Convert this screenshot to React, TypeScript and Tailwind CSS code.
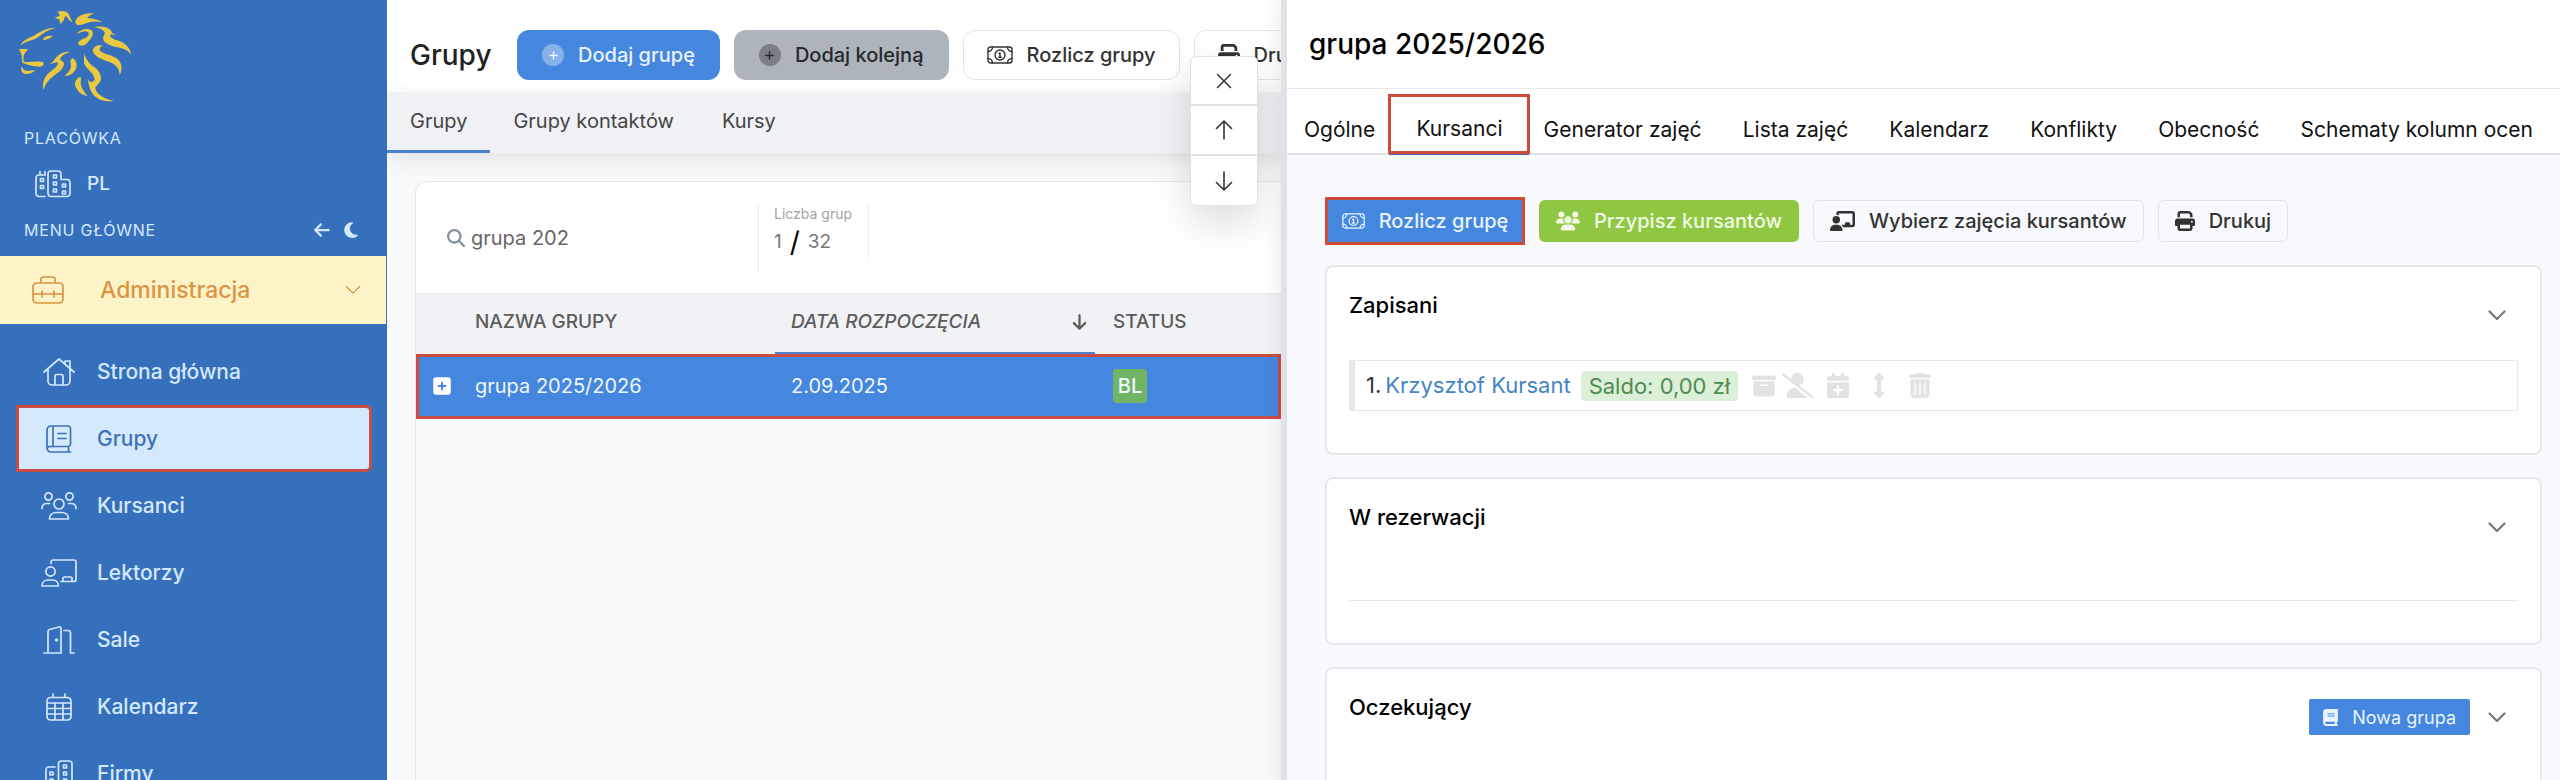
import type { ReactNode } from "react";
import {
  FaArrowDown,
  FaArrowLeft,
  FaBook,
  FaBoxArchive,
  FaCalendarPlus,
  FaChalkboardUser,
  FaMagnifyingGlass,
  FaMoon,
  FaPlus,
  FaPrint,
  FaSquarePlus,
  FaTrashCan,
  FaUserSlash,
  FaUsers,
} from "react-icons/fa6";
import { FaArrowsAltV } from "react-icons/fa";

type LineIconProps = { viewBox: string; className: string; children: ReactNode; strokeWidth?: number };

function LineIcon({ viewBox, className, children, strokeWidth = 1.7 }: LineIconProps) {
  return (
    <svg
      viewBox={viewBox}
      className={className}
      fill="none"
      stroke="currentColor"
      strokeWidth={strokeWidth}
      strokeLinecap="round"
      strokeLinejoin="round"
      aria-hidden="true"
    >
      {children}
    </svg>
  );
}

function LionLogo() {
  return (
    <svg viewBox="54 28 342 280" className="h-[94px] w-[114px]" fill="#eac83f" role="img" aria-label="Logo">
      <path d="M62 136C68 120 84 116 98 109C118 98 138 82 168 83C148 88 134 96 122 106C112 114 104 118 94 121C82 125 72 128 62 136Z" />
      <path d="M128 120C132 108 144 106 158 108C150 116 140 120 128 120Z" />
      <path d="M58 147L84 147C80 154 76 158 72 164C70 172 70 178 71 185C90 188 106 182 128 186C134 192 130 198 122 200C104 200 86 196 68 189C64 180 68 168 62 158Z" />
      <path d="M64 198C68 208 74 212 82 213C90 213 98 211 106 211C98 219 88 223 76 222C66 220 62 212 64 198Z" />
      <path d="M172 36C186 30 204 34 208 46C210 54 214 58 217 66C206 62 204 52 196 48C192 52 196 60 180 73C180 62 182 58 164 54C172 50 178 48 180 44Z" />
      <path d="M226 68C226 50 250 38 282 39C274 44 266 48 262 54C276 56 294 58 306 67C284 62 268 66 252 72C240 77 228 76 226 68Z" />
      <path d="M229 102C238 90 260 82 274 90C284 100 276 114 262 128C254 138 240 140 235 132C234 122 246 118 256 114C264 110 270 102 264 96C256 90 242 96 229 102Z" />
      <path d="M281 82C300 76 330 82 334 94C336 100 342 104 350 106C340 106 330 100 330 108C336 120 358 120 372 130C384 140 392 150 393 164C384 150 372 146 352 142C334 138 312 130 309 116C310 104 318 102 312 94C304 86 294 84 281 82Z" />
      <path d="M278 152C280 138 296 132 310 138C298 140 296 148 304 155C318 164 344 166 356 180C368 196 366 214 359 225C358 206 350 196 334 188C314 180 282 172 278 152Z" />
      <path d="M252 160C258 178 266 188 278 198C292 206 302 218 303 236C301 250 288 256 286 264C288 282 314 298 342 302C318 308 292 300 278 282C268 268 266 250 263 238C270 248 278 248 284 240C286 222 258 208 252 190Z" />
      <path d="M209 156C190 152 172 166 164 178C160 186 154 190 150 192C160 192 168 184 174 188C174 204 148 212 138 228C128 244 128 258 130 270C136 252 144 240 158 230C174 218 192 208 192 190C190 182 180 182 180 176C186 166 196 160 209 156Z" />
      <path d="M217 174C230 182 234 196 226 210C218 222 208 228 194 228C206 216 216 206 212 192C210 184 212 178 217 174Z" />
      <path d="M240 230C226 236 220 252 230 266C238 280 248 284 263 288C252 274 242 262 242 246C242 240 246 234 240 230Z" />
    </svg>
  );
}

function BuildingsIcon({ className }: { className: string }) {
  return (
    <LineIcon viewBox="0 0 36 28" className={className}>
      <path d="M10 26.500H4a3 3 0 0 1-3-3V8a3 3 0 0 1 3-3h6M5 5V1.500M10 5V1.500" />
      <path d="M13 23.500V4a3 3 0 0 1 3-3h7a3 3 0 0 1 3 3v5.500h6a3 3 0 0 1 3 3v11a3 3 0 0 1-3 3H16a3 3 0 0 1-3-3Z" />
      <path d="M5.500 8.500h3v3h-3zM5.500 15.500h3v3h-3zM18.500 5h3v3h-3zM18.500 12h3v3h-3zM18.500 19h3v3h-3zM27.500 14h3v3h-3zM27.500 21h3v3h-3z" />
    </LineIcon>
  );
}

function BriefcaseIcon() {
  return (
    <LineIcon viewBox="0 0 32 28" className="h-7 w-8">
      <path d="M9 7V3a2 2 0 0 1 2-2h10a2 2 0 0 1 2 2v4M5 7h22a4 4 0 0 1 4 4v12a4 4 0 0 1-4 4H5a4 4 0 0 1-4-4V11a4 4 0 0 1 4-4ZM1 18h30M10 15v6M22 15v6" />
    </LineIcon>
  );
}

function HomeIcon() {
  return (
    <LineIcon viewBox="0 0 32 28" className="h-7 w-8">
      <path d="M1 14 16 1l15 13M5 11v12a4 4 0 0 0 4 4h14a4 4 0 0 0 4-4V11M22 5.500V3h5v7M12 27v-9a1.500 1.500 0 0 1 1.500-1.500h5A1.500 1.500 0 0 1 20 18v9" />
    </LineIcon>
  );
}

function BookIcon() {
  return (
    <LineIcon viewBox="0 0 26 28" className="h-7 w-[26px]">
      <path d="M24.500 27H5a4 4 0 0 1-4-4V5a4 4 0 0 1 4-4h17a2.500 2.500 0 0 1 2.500 2.500V19a2.500 2.500 0 0 1-2.500 2.500H4.500A3 3 0 0 0 1 24M7 1v20.500M22.500 21.500V27M12 8.500h8M12 13.500h8" />
    </LineIcon>
  );
}

function UsersIcon() {
  return (
    <LineIcon viewBox="0 0 36 28" className="h-7 w-9">
      <circle cx="7.500" cy="4.500" r="3.600" />
      <circle cx="28.500" cy="4.500" r="3.600" />
      <circle cx="18" cy="12" r="5" />
      <path d="M1 16.500c0-3 2-5 5-5h2.500M35 16.500c0-3-2-5-5-5h-2.500M8.500 27c0-4 3-6.500 7-6.500h5c4 0 7 2.500 7 6.500Z" />
    </LineIcon>
  );
}

function TeacherIcon() {
  return (
    <LineIcon viewBox="0 0 36 28" className="h-7 w-9">
      <circle cx="9.500" cy="12.500" r="4.600" />
      <path d="M1 27c0-3.500 2.500-6 6-6h4.500c3.500 0 6 2.500 6 6ZM10 4.500V3a2 2 0 0 1 2-2h21a2 2 0 0 1 2 2v17.500a2 2 0 0 1-2 2H20M22 22.500v-3a1.500 1.500 0 0 1 1.500-1.500h6a1.500 1.500 0 0 1 1.500 1.500v3" />
    </LineIcon>
  );
}

function DoorIcon() {
  return (
    <LineIcon viewBox="0 0 32 28" className="h-7 w-8">
      <path d="M1 27h17V2.500A1.500 1.500 0 0 0 16 1L6.500 3.500A2 2 0 0 0 5 5.500V27M21 4.500h4a2.500 2.500 0 0 1 2.500 2.500v20H31" />
      <circle cx="13.500" cy="14" r="0.800" fill="currentColor" />
    </LineIcon>
  );
}

function CalendarIcon() {
  return (
    <LineIcon viewBox="0 0 26 28" className="h-7 w-[26px]">
      <path d="M4.500 4.500h17A3.500 3.500 0 0 1 25 8v15.500a3.500 3.500 0 0 1-3.500 3.500h-17A3.500 3.500 0 0 1 1 23.500V8a3.500 3.500 0 0 1 3.500-3.500ZM7 1v3.500M19 1v3.500M1 10h24M1 15.500h24M1 21h24M9 10v17M17 10v17" />
    </LineIcon>
  );
}

function OfficeIcon() {
  return (
    <LineIcon viewBox="0 0 28 28" className="h-7 w-7">
      <path d="M9 27H3.500A2.500 2.500 0 0 1 1 24.500V9.500A2.500 2.500 0 0 1 3.500 7H10M13.500 27V3.500A2.500 2.500 0 0 1 16 1h8.500A2.500 2.500 0 0 1 27 3.500v21a2.500 2.500 0 0 1-2.500 2.500Z" />
      <path d="M5 12h3v3H5zM5 19h3v3H5zM18.500 5h3v3h-3zM18.500 12h3v3h-3zM18.500 19h3v3h-3z" />
    </LineIcon>
  );
}

function BanknoteIcon({ className }: { className: string }) {
  return (
    <LineIcon viewBox="0 0 26 18" className={className} strokeWidth={1.400}>
      <rect x="1" y="1" width="24" height="16" rx="2.500" />
      <circle cx="13" cy="9" r="5" />
      <path d="M12 7.500l1-.5v4M11.800 11.300h2.400M1 5.500c2.500 0 4.500-2 4.500-4.500M25 5.500c-2.500 0-4.500-2-4.500-4.500M1 12.500c2.500 0 4.500 2 4.500 4.500M25 12.500c-2.500 0-4.500 2-4.500 4.500" />
    </LineIcon>
  );
}

function ChevronIcon({ className, strokeWidth }: { className: string; strokeWidth: number }) {
  return (
    <LineIcon viewBox="0 0 18 11" className={className} strokeWidth={strokeWidth}>
      <path d="M1.500 1.500 9 9l7.500-7.500" />
    </LineIcon>
  );
}

const menuItems = [
  { label: "Strona główna", icon: <HomeIcon /> },
  { label: "Grupy", icon: <BookIcon />, active: true },
  { label: "Kursanci", icon: <UsersIcon /> },
  { label: "Lektorzy", icon: <TeacherIcon /> },
  { label: "Sale", icon: <DoorIcon /> },
  { label: "Kalendarz", icon: <CalendarIcon /> },
  { label: "Firmy", icon: <OfficeIcon /> },
];

function Sidebar() {
  return (
    <aside className="flex h-full flex-col overflow-hidden bg-[#3670bd] text-[#d4e8fc]">
      <div className="px-[18px] pt-[9px]">
        <LionLogo />
      </div>
      <div className="mt-[21px] px-6 text-[16px] leading-7 tracking-wider">PLACÓWKA</div>
      <a href="#pl" className="mt-3 flex h-10 shrink-0 items-center gap-4 pl-[35px] text-[19px] font-medium">
        <BuildingsIcon className="h-7 w-9" />
        PL
      </a>
      <div className="mt-2 flex h-9 shrink-0 items-center justify-between pr-7 pl-6">
        <span className="text-[16px] tracking-wider">MENU GŁÓWNE</span>
        <span className="flex items-center gap-3">
          <button type="button" aria-label="Zwiń menu">
            <FaArrowLeft className="h-[18px] w-[18px]" />
          </button>
          <button type="button" aria-label="Tryb ciemny">
            <FaMoon className="h-[18px] w-4" />
          </button>
        </span>
      </div>
      <button
        type="button"
        className="mt-2 mr-px flex h-[68px] shrink-0 items-center bg-[#fcf3c7] pr-[25px] pl-8 text-[23px] font-medium text-[#dc9344]"
      >
        <BriefcaseIcon />
        <span className="ml-9 flex-1 text-left">Administracja</span>
        <ChevronIcon className="h-[10px] w-4" strokeWidth={1.400} />
      </button>
      <nav className="mt-[14px] flex flex-col pr-[15px] pl-4">
        {menuItems.map((item) => (
          <a
            key={item.label}
            href="#menu"
            className={
              item.active
                ? "flex h-[67px] shrink-0 items-center rounded-r-md border-3 border-[#c94c45] bg-[#d5e9fd] text-[21px] font-medium text-[#3f72b8]"
                : "flex h-[67px] shrink-0 items-center border-3 border-transparent text-[21px] font-medium"
            }
          >
            <span className="ml-[18px] flex w-11 justify-center">{item.icon}</span>
            <span className="ml-4">{item.label}</span>
          </a>
        ))}
      </nav>
    </aside>
  );
}

function GroupsPanel() {
  return (
    <main className="relative h-full overflow-hidden bg-[#f8f9fb]">
      <div className="flex h-full flex-col">
        <header className="flex h-[92px] shrink-0 items-center bg-white pt-[30px] pb-3 pl-[23px] whitespace-nowrap">
          <h1 className="w-[107px] shrink-0 text-[28px] font-medium text-[#222]">Grupy</h1>
          <div className="flex gap-[14px] text-[20px] font-medium">
            <button
              type="button"
              className="flex h-[50px] items-center gap-[14px] rounded-xl bg-[#4587de] px-[25px] text-[#e8f3ff]"
            >
              <span className="flex h-[22px] w-[22px] items-center justify-center rounded-full bg-white/35">
                <FaPlus className="h-[11px] w-[11px]" />
              </span>
              Dodaj grupę
            </button>
            <button
              type="button"
              className="flex h-[50px] items-center gap-[14px] rounded-xl bg-[#aeb4bc] px-[25px] text-[#26282c]"
            >
              <span className="flex h-[22px] w-[22px] items-center justify-center rounded-full bg-[#7b7e85]">
                <FaPlus className="h-[11px] w-[11px]" />
              </span>
              Dodaj kolejną
            </button>
            <button
              type="button"
              className="flex h-[50px] items-center gap-[14px] rounded-xl border border-[#e2e4e8] bg-white px-[23px] text-[#333]"
            >
              <BanknoteIcon className="h-[18px] w-[26px]" />
              Rozlicz grupy
            </button>
            <button
              type="button"
              className="flex h-[50px] items-center gap-[14px] rounded-xl border border-[#e2e4e8] bg-white px-[23px] text-[#333]"
            >
              <FaPrint className="h-[22px] w-[22px]" />
              Drukuj
            </button>
          </div>
        </header>
        <nav className="z-10 flex h-[61px] shrink-0 bg-[#f1f2f5] text-[20px] text-[#444] shadow-[0_6px_20px_rgba(0,0,0,0.09)]">
          <a href="#grupy" className="flex items-center border-b-3 border-[#4a82cc] px-[23px]">
            Grupy
          </a>
          <a href="#kontakty" className="flex items-center border-b-3 border-transparent px-[23px]">
            Grupy kontaktów
          </a>
          <a href="#kursy" className="flex items-center border-b-3 border-transparent px-[25px]">
            Kursy
          </a>
        </nav>
        <section className="mt-7 ml-7 flex-1 rounded-tl-xl border-t border-l border-[#e4e6ea]">
          <div className="flex h-[111px] rounded-tl-xl bg-white pt-[22px] pl-[31px]">
            <label className="flex h-[67px] w-[312px] items-center gap-[6px] border-r border-[#ebebeb]">
              <FaMagnifyingGlass className="h-[18px] w-[18px] text-[#8590a3]" />
              <input
                type="text"
                aria-label="Szukaj"
                defaultValue="grupa 202"
                className="w-64 bg-transparent text-[20px] text-[#666] outline-none"
              />
            </label>
            <div className="flex h-[54px] w-[110px] flex-col border-r border-[#ebebeb] pl-[15px]">
              <span className="text-[14px] leading-5 text-[#a3a3a3]">Liczba grup</span>
              <span className="flex items-center gap-2 text-[19px] leading-9 text-[#777]">
                1 <span className="text-[28px] text-black">/</span> 32
              </span>
            </div>
          </div>
          <table className="w-full table-fixed border-collapse text-left text-[20px]">
            <colgroup>
              <col className="w-[359px]" />
              <col className="w-[320px]" />
              <col />
            </colgroup>
            <thead className="text-[19px] text-[#5c5c5c]">
              <tr className="h-[60px] border-t border-[#e4e6ea] bg-[#f1f2f5]">
                <th className="pb-1 pl-[59px] font-medium">NAZWA GRUPY</th>
                <th className="pr-2 pb-1 pl-4 font-medium italic shadow-[inset_0_-2px_0_#4a82cc]">
                  <span className="flex items-center justify-between">
                    DATA ROZPOCZĘCIA
                    <FaArrowDown className="h-[18px] w-[15px]" />
                  </span>
                </th>
                <th className="pb-1 pl-[18px] font-medium">STATUS</th>
              </tr>
            </thead>
            <tbody>
              <tr className="h-[65px] bg-[#4587de] text-[#eef6ff] outline-3 -outline-offset-3 outline-[#c94c45]">
                <td className="pl-[17px]">
                  <span className="flex items-center gap-[24px]">
                    <FaSquarePlus className="h-5 w-[18px] text-white" />
                    grupa 2025/2026
                  </span>
                </td>
                <td className="px-4">2.09.2025</td>
                <td className="pl-[18px]">
                  <span className="flex h-[34px] w-[34px] items-center justify-center rounded-sm bg-[#6fb565] font-medium">
                    BL
                  </span>
                </td>
              </tr>
            </tbody>
          </table>
        </section>
      </div>
      <div className="absolute top-14 right-[23px] z-20 flex w-[68px] flex-col divide-y-2 divide-[#e0e1e5] rounded-md border border-[#e0e1e5] bg-white text-[#333] shadow-[0_16px_40px_rgba(0,0,0,0.14)]">
        <button type="button" aria-label="Zamknij" className="flex h-[49px] items-center justify-center">
          <LineIcon viewBox="0 0 16 16" className="h-4 w-4" strokeWidth={1.500}>
            <path d="m1.500 1.500 13 13M14.500 1.500l-13 13" />
          </LineIcon>
        </button>
        <button type="button" aria-label="W górę" className="flex h-[50px] items-center justify-center">
          <LineIcon viewBox="0 0 18 20" className="h-5 w-[18px]" strokeWidth={1.600}>
            <path d="M9 19V1M1.500 8.500 9 1l7.500 7.500" />
          </LineIcon>
        </button>
        <button type="button" aria-label="W dół" className="flex h-[49px] items-center justify-center">
          <LineIcon viewBox="0 0 18 20" className="h-5 w-[18px]" strokeWidth={1.600}>
            <path d="M9 1v18M1.500 11.500 9 19l7.500-7.500" />
          </LineIcon>
        </button>
      </div>
    </main>
  );
}

const detailTabs = [
  "Generator zajęć",
  "Lista zajęć",
  "Kalendarz",
  "Konflikty",
  "Obecność",
  "Schematy kolumn ocen",
];

function Card({ title, action, children }: { title: string; action?: ReactNode; children?: ReactNode }) {
  return (
    <section className="rounded-lg border-2 border-[#e6e8eb] bg-white px-[22px] pt-[22px] pb-[42px]">
      <div className="flex items-start justify-between">
        <h3 className="text-[22px] leading-8 font-medium text-black">{title}</h3>
        <div className="mt-2 mr-3 flex h-9 items-center gap-[18px]">
          {action}
          <button type="button" aria-label={`Rozwiń: ${title}`}>
            <ChevronIcon className="h-[11px] w-[18px] text-[#777]" strokeWidth={2.200} />
          </button>
        </div>
      </div>
      {children}
    </section>
  );
}

function DetailPanel() {
  return (
    <section className="z-30 flex h-full flex-col overflow-hidden border-l-6 border-[#e0e2e7] bg-[#f8f9fc] whitespace-nowrap shadow-[-4px_0_16px_rgba(0,0,0,0.07)]">
      <header className="flex h-[89px] shrink-0 items-center border-b border-[#e6e7ea] bg-white pl-[22px]">
        <h2 className="text-[28px] font-medium text-black">grupa 2025/2026</h2>
      </header>
      <nav className="flex h-[66px] shrink-0 justify-between border-b-2 border-[#dfe0e4] bg-white pt-[5px] pr-[27px] pl-[17px] text-[21px] text-[#111]">
        <a href="#ogolne" className="flex items-center pt-3">
          Ogólne
        </a>
        <a
          href="#kursanci"
          className="-mx-7 flex h-[60px] items-center border-3 border-[#d04a3c] px-[25px] pt-[9px] shadow-[0_2px_0_-1px_#4a5fae]"
        >
          Kursanci
        </a>
        {detailTabs.map((tab) => (
          <a key={tab} href="#tab" className="flex items-center pt-3">
            {tab}
          </a>
        ))}
      </nav>
      <div className="flex flex-col gap-[22px] pt-[42px] pr-[18px] pl-[38px]">
        <div className="-mb-0.5 flex items-center gap-[14px] text-[20px] font-medium text-[#333]">
          <button
            type="button"
            className="flex h-12 w-[200px] items-center justify-center gap-[14px] border-3 border-[#d04a3c] bg-[#4587de] text-[#e8f3ff]"
          >
            <BanknoteIcon className="h-4 w-[23px]" />
            Rozlicz grupę
          </button>
          <button
            type="button"
            className="flex h-[42px] items-center gap-[14px] rounded-md bg-[#8fc742] px-[17px] text-[#f2fbe4]"
          >
            <FaUsers className="h-5 w-6" />
            Przypisz kursantów
          </button>
          <button
            type="button"
            className="flex h-[42px] items-center gap-[14px] rounded-md border border-[#e0e2e6] px-4"
          >
            <FaChalkboardUser className="h-5 w-[25px]" />
            Wybierz zajęcia kursantów
          </button>
          <button
            type="button"
            className="flex h-[42px] items-center gap-[14px] rounded-md border border-[#e0e2e6] px-4"
          >
            <FaPrint className="h-5 w-5" />
            Drukuj
          </button>
        </div>
        <Card title="Zapisani">
          <div className="mt-[27px] flex h-[51px] items-center border border-l-6 border-[#e8e8e8] pl-[11px] text-[22px]">
            <span className="text-[#333]">1.</span>
            <a href="#kursant" className="ml-1 text-[#4584c6]">
              Krzysztof Kursant
            </a>
            <span className="ml-[10px] rounded-sm bg-[#dcefd8] px-2 leading-[30px] text-[#4f8a50]">Saldo: 0,00 zł</span>
            <span className="ml-[14px] flex items-center text-[#e2e2e2]">
              <FaBoxArchive className="h-6 w-6" />
              <FaUserSlash className="ml-[6px] h-[25px] w-[31px]" />
              <FaCalendarPlus className="ml-[14px] h-[25px] w-[22px]" />
              <FaArrowsAltV className="ml-[22px] h-[25px] w-4" />
              <FaTrashCan className="ml-[22px] h-[25px] w-[22px]" />
            </span>
          </div>
        </Card>
        <Card title="W rezerwacji">
          <div className="mt-[55px] border-t border-[#e8e9eb]" />
        </Card>
        <Card
          title="Oczekujący"
          action={
            <button
              type="button"
              className="flex h-9 items-center gap-[14px] rounded-xs bg-[#4587de] px-[14px] text-[18px] text-[#e8f3ff]"
            >
              <FaBook className="h-[17px] w-[15px]" />
              Nowa grupa
            </button>
          }
        >
          <div className="mt-[55px] border-t border-[#e8e9eb]" />
        </Card>
      </div>
    </section>
  );
}

export default function App() {
  return (
    <div className="grid h-screen grid-cols-[387px_minmax(0,894fr)_minmax(0,1279fr)] overflow-hidden bg-white font-['Inter','Noto_Sans',sans-serif]">
      <Sidebar />
      <GroupsPanel />
      <DetailPanel />
    </div>
  );
}
